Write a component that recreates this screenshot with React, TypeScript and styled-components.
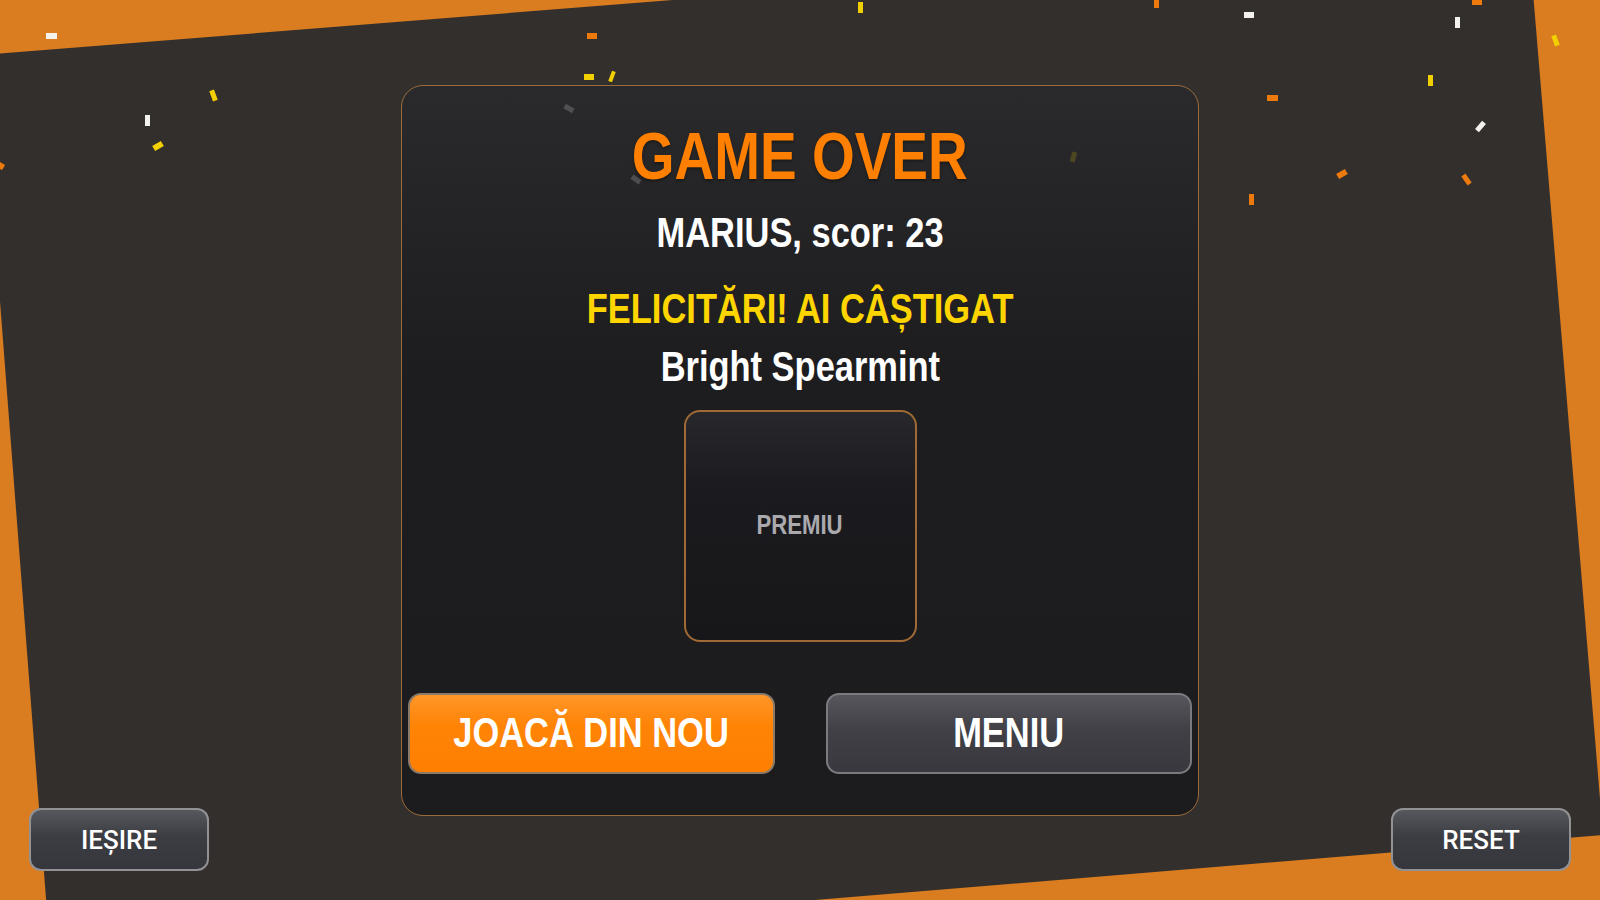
import React from "react";
import styled, { createGlobalStyle } from "styled-components";

const GlobalStyle = createGlobalStyle`
  html, body { margin: 0; padding: 0; }
  body {
    background: #da7c20;
    overflow: hidden;
    font-family: "Liberation Sans", Arial, sans-serif;
  }
  * { box-sizing: border-box; }
`;

const Stage = styled.div`
  position: relative;
  width: 100vw;
  height: 100vh;
  display: grid;
  grid-template: 1fr / 1fr;
  overflow: hidden;
  background: #da7c20;
  & > * { grid-area: 1 / 1; position: relative; }
`;

const Backdrop = styled.div`
  background: #332f2c;
  clip-path: polygon(-19px 55px, 1528px -68px, 1603px 835px, 51px 963px);
`;

const ConfettiLayer = styled.div`
  pointer-events: none;
`;

type PieceProps = { $x: number; $y: number; $w: number; $h: number; $r: number; $c: string };

const Piece = styled.span<PieceProps>`
  position: absolute;
  left: ${(p) => p.$x - p.$w / 2}px;
  top: ${(p) => p.$y - p.$h / 2}px;
  width: ${(p) => p.$w}px;
  height: ${(p) => p.$h}px;
  background: ${(p) => p.$c};
  transform: rotate(${(p) => p.$r}deg);
`;

/* condensed face: the narrow bold family is not installed, so the regular bold is narrowed */
const Narrow = styled.span`
  display: inline-block;
  white-space: nowrap;
  transform: scaleX(0.82);
`;

const Panel = styled.section`
  place-self: center;
  width: 798px;
  border: 1.5px solid #9a6b3c;
  border-radius: 22px;
  padding: 36px 6px 41px;
  display: flex;
  flex-direction: column;
  align-items: center;
  background: linear-gradient(
    180deg,
    rgba(40, 41, 44, 0.8) 0%,
    rgba(24, 25, 28, 0.8) 38%,
    rgba(22, 23, 26, 0.8) 100%
  );
`;

const Title = styled.h1`
  margin: 0;
  font-size: 67px;
  line-height: 1;
  font-weight: 700;
  color: #ff7f00;
  text-shadow: 0 2px 3px rgba(0, 0, 0, 0.35);
`;

const Line = styled.p<{ $gap: number; $color: string }>`
  margin: ${(p) => p.$gap}px 0 0;
  font-size: 42px;
  line-height: 1;
  font-weight: 700;
  color: ${(p) => p.$color};
`;

const PrizeBox = styled.div`
  margin-top: 22px;
  width: 233px;
  height: 232px;
  border: 2px solid #a06a34;
  border-radius: 16px;
  display: flex;
  align-items: center;
  justify-content: center;
  background: linear-gradient(180deg, #28282c 0%, #1b1b1f 34%, #17171a 100%);
`;

const PrizeLabel = styled.span`
  font-size: 27px;
  font-weight: 700;
  color: #aaaaae;
`;

const Actions = styled.div`
  margin-top: 51px;
  width: 100%;
  display: grid;
  grid-template-columns: 1fr 1fr;
  gap: 51px;
`;

const ActionButton = styled.button<{ $primary?: boolean }>`
  height: 81px;
  border: 2px solid ${(p) => (p.$primary ? "#8c7a68" : "#7a7a7f")};
  border-radius: 13px;
  font-family: inherit;
  font-size: 42px;
  font-weight: 700;
  color: #ffffff;
  cursor: pointer;
  background: ${(p) =>
    p.$primary
      ? "linear-gradient(180deg, #ff9628 0%, #ff8406 40%, #ff7f00 100%)"
      : "linear-gradient(180deg, #56565c 0%, #404046 45%, #38383e 100%)"};
`;

const Footer = styled.div`
  align-self: end;
  display: flex;
  justify-content: space-between;
  padding: 0 29px 29px;
`;

const CornerButton = styled.button`
  width: 180px;
  height: 63px;
  border: 2px solid #929294;
  border-radius: 12px;
  font-family: Roboto, "Liberation Sans", sans-serif;
  font-size: 26px;
  font-weight: 500;
  color: #ffffff;
  cursor: pointer;
  background: linear-gradient(180deg, #57585e 0%, #3c3d43 45%, #36373d 100%);
`;

const WHITE = "#f4f2ec";
const YELLOW = "#f2d000";
const ORANGE = "#ee7a0e";

const confetti: [number, number, number, number, number, string][] = [
  [51, 36, 11, 6, 0, WHITE],
  [592, 36, 10, 6, 0, ORANGE],
  [589, 77, 10, 6, 0, YELLOW],
  [612, 76, 4, 11, 20, YELLOW],
  [213, 95, 5, 11, -20, YELLOW],
  [147, 120, 5, 11, 0, WHITE],
  [158, 146, 10, 6, -30, YELLOW],
  [569, 108, 10, 5, 30, WHITE],
  [636, 179, 10, 5, 35, WHITE],
  [1073, 157, 5, 10, 15, YELLOW],
  [860, 7, 5, 11, 0, YELLOW],
  [1156, 3, 5, 9, 0, ORANGE],
  [1249, 15, 10, 6, 0, WHITE],
  [1477, 2, 10, 5, 0, ORANGE],
  [1457, 22, 5, 11, 0, WHITE],
  [1555, 40, 5, 11, -20, YELLOW],
  [1430, 80, 5, 11, 0, YELLOW],
  [1272, 98, 11, 6, 0, ORANGE],
  [1480, 126, 5, 11, 40, WHITE],
  [1342, 174, 10, 6, -30, ORANGE],
  [1466, 179, 5, 11, -35, ORANGE],
  [1251, 199, 5, 11, 0, ORANGE],
  [1, 166, 6, 6, 30, ORANGE],
];

export default function App() {
  return (
    <>
      <GlobalStyle />
      <Stage>
        <Backdrop />
        <ConfettiLayer>
          {confetti.map(([x, y, w, h, r, c], i) => (
            <Piece key={i} $x={x} $y={y} $w={w} $h={h} $r={r} $c={c} />
          ))}
        </ConfettiLayer>
        <Panel>
          <Title>
            <Narrow>GAME OVER</Narrow>
          </Title>
          <Line $gap={23} $color="#ffffff">
            <Narrow>MARIUS, scor: 23</Narrow>
          </Line>
          <Line $gap={34} $color="#ffd500">
            <Narrow>FELICITĂRI! AI CÂȘTIGAT</Narrow>
          </Line>
          <Line $gap={16} $color="#ffffff">
            <Narrow>Bright Spearmint</Narrow>
          </Line>
          <PrizeBox>
            <PrizeLabel>
              <Narrow>PREMIU</Narrow>
            </PrizeLabel>
          </PrizeBox>
          <Actions>
            <ActionButton $primary>
              <Narrow>JOACĂ DIN NOU</Narrow>
            </ActionButton>
            <ActionButton>
              <Narrow>MENIU</Narrow>
            </ActionButton>
          </Actions>
        </Panel>
        <Footer>
          <CornerButton>IEȘIRE</CornerButton>
          <CornerButton>RESET</CornerButton>
        </Footer>
      </Stage>
    </>
  );
}
